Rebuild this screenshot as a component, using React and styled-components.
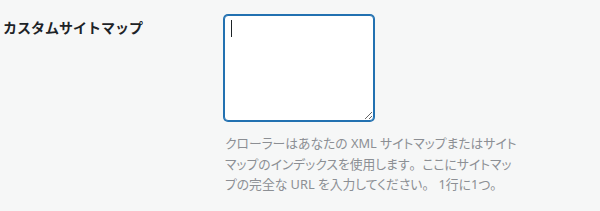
import styled, { createGlobalStyle } from 'styled-components';

const GlobalStyle = createGlobalStyle`
	html, body {
		margin: 0;
		padding: 0;
		background: #f6f7f7;
	}
	body {
		font-family: "Noto Sans", "Noto Sans CJK JP", sans-serif;
		color: #1d2327;
	}
`;

const FormTable = styled.div`
	display: grid;
	grid-template-columns: 213px 1fr;
	padding-left: 3px;
	padding-top: 14px;
`;

const Label = styled.div`
	font-family: "Noto Sans CJK JP", sans-serif;
	font-size: 14px;
	font-weight: 700;
	line-height: 1.3;
	color: #1d2327;
	padding-top: 4px;
`;

const Field = styled.div`
	display: flex;
	flex-direction: column;
	padding-left: 8px;
`;

const BoxWrap = styled.div`
	position: relative;
	width: 150px;
	height: 106px;
	margin-top: 1px;
`;

const Box = styled.textarea`
	display: block;
	box-sizing: border-box;
	width: 150px;
	height: 106px;
	margin: 0;
	padding: 2px 6px;
	border: 1px solid #2271b1;
	box-shadow: 0 0 0 1px #2271b1;
	border-radius: 4px;
	background: #fff;
	outline: none;
	font-family: "Noto Sans", sans-serif;
	font-size: 14px;
	line-height: 1.4;
	color: #2c3338;
	caret-color: #1d2327;
`;

const Caret = styled.span`
	position: absolute;
	left: 7px;
	top: 5px;
	width: 1px;
	height: 17px;
	background: #1d2327;
	pointer-events: none;
`;

const Description = styled.p`
	margin: 12px 0 0 1px;
	width: 320px;
	font-family: "Noto Sans", "Noto Sans CJK JP", sans-serif;
	font-feature-settings: "palt";
	font-size: 12.8px;
	line-height: 20.5px;
	color: #8c8f94;
`;

const Punct = styled.span`
	font-feature-settings: normal;
`;

export default function App() {
	return (
		<>
			<GlobalStyle />
			<FormTable>
				<Label>カスタムサイトマップ</Label>
				<Field>
					<BoxWrap>
						<Box />
						<Caret />
					</BoxWrap>
					<Description>
						クローラーはあなたの XML サイトマップまたはサイト<br />
						マップのインデックスを使用します<Punct>。</Punct>ここにサイトマッ<br />
						プの完全な URL を入力してください<Punct>。</Punct> 1行に1つ<Punct>。</Punct>
					</Description>
				</Field>
			</FormTable>
		</>
	);
}
